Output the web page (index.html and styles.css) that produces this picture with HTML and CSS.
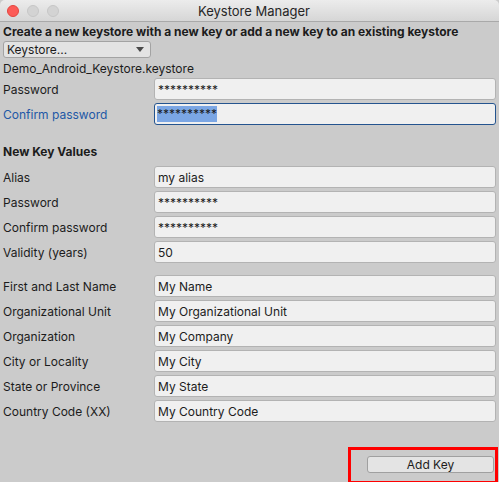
FILE: index.html
```html
<!DOCTYPE html>
<html>
<head>
<meta charset="utf-8">
<link rel="stylesheet" href="styles.css">
</head>
<body>
<div class="window">
  <div class="titlebar">
    <div class="lights">
      <span class="light red"></span>
      <span class="light gray"></span>
      <span class="light gray"></span>
    </div>
    <div class="title">Keystore Manager</div>
  </div>
  <div class="content">
    <div class="heading">Create a new keystore with a new key or add a new key to an existing keystore</div>
    <div class="dropdown"><span>Keystore...</span><span class="arrow"></span></div>
    <div class="line">Demo_Android_Keystore.keystore</div>
    <div class="group">
      <div class="row"><label class="label">Password</label><div class="field">**********</div></div>
      <div class="row"><label class="label focus">Confirm password</label><div class="field focused"><span class="sel">**********</span></div></div>
    </div>
    <div class="heading section">New Key Values</div>
    <div class="group">
      <div class="row"><label class="label">Alias</label><div class="field">my alias</div></div>
      <div class="row"><label class="label">Password</label><div class="field">**********</div></div>
      <div class="row"><label class="label">Confirm password</label><div class="field">**********</div></div>
      <div class="row"><label class="label">Validity (years)</label><div class="field">50</div></div>
    </div>
    <div class="group second">
      <div class="row"><label class="label">First and Last Name</label><div class="field">My Name</div></div>
      <div class="row"><label class="label">Organizational Unit</label><div class="field">My Organizational Unit</div></div>
      <div class="row"><label class="label">Organization</label><div class="field">My Company</div></div>
      <div class="row"><label class="label">City or Locality</label><div class="field">My City</div></div>
      <div class="row"><label class="label">State or Province</label><div class="field">My State</div></div>
      <div class="row"><label class="label">Country Code (XX)</label><div class="field">My Country Code</div></div>
    </div>
    <div class="footer">
      <div class="highlight"><button class="button">Add Key</button></div>
    </div>
  </div>
</div>
</body>
</html>
```
FILE: styles.css
```css
html, body {
  margin: 0;
  padding: 0;
  background: #cbcbcb;
}
body {
  width: 499px;
  height: 482px;
  overflow: hidden;
  font-family: Inter, "Liberation Sans", sans-serif;
  font-size: 12px;
  color: #1c1c1c;
}
.window {
  width: 499px;
  height: 482px;
  background: #cbcbcb;
  border-radius: 5px 5px 0 0;
  overflow: hidden;
}
.titlebar {
  height: 21px;
  border-bottom: 1px solid #a9a9a9;
  background: linear-gradient(#ececec, #d6d6d6);
  display: flex;
  align-items: center;
}
.lights {
  display: flex;
  gap: 8px;
  padding-left: 7px;
  padding-top: 1px;
}
.light {
  width: 12px;
  height: 12px;
  border-radius: 50%;
  box-sizing: border-box;
}
.light.red {
  background: #fc5b57;
  border: 1px solid #e2463f;
}
.light.gray {
  background: #d3d3d3;
  border: 1px solid #c6c6c6;
}
.title {
  flex: 1;
  text-align: center;
  font-size: 13px;
  color: #262626;
  padding-right: 50px;
  padding-top: 1px;
}
.content {
  padding: 0 3px;
  display: flex;
  flex-direction: column;
}
.heading {
  font-weight: 700;
  line-height: 19px;
  height: 19px;
  white-space: nowrap;
  margin-top: 0;
}
.heading.section {
  margin-top: 17px;
  margin-bottom: 5px;
}
.dropdown {
  width: 148px;
  height: 17px;
  box-sizing: border-box;
  border: 1px solid #a3a3a3;
  border-radius: 3px;
  background: #e3e3e3;
  display: flex;
  align-items: center;
  justify-content: space-between;
  padding: 0 6px 0 3px;
  line-height: 15px;
}
.arrow {
  width: 0;
  height: 0;
  border-left: 4px solid transparent;
  border-right: 4px solid transparent;
  border-top: 5px solid #4a4a4a;
}
.line {
  line-height: 19px;
  height: 19px;
  margin-top: 1px;
}
.group {
  display: flex;
  flex-direction: column;
  gap: 3px;
}
.group.second {
  margin-top: 12px;
}
.row {
  display: flex;
  height: 22px;
  align-items: center;
}
.label {
  width: 151px;
  flex: none;
}
.label.focus {
  color: #2258a6;
}
.field {
  flex: 1;
  height: 22px;
  box-sizing: border-box;
  border: 1px solid #b3b3b3;
  border-radius: 3px;
  background: #f0f0f0;
  padding: 0 3px;
  display: flex;
  align-items: center;
  white-space: nowrap;
}
.field.focused {
  border-color: #24548f;
  padding-left: 2px;
}
.sel {
  background: #7ba6e4;
  padding: 1px 0;
  line-height: 14px;
}
.footer {
  display: flex;
  justify-content: flex-end;
  margin-top: 25px;
  margin-right: -2px;
}
.highlight {
  border: 3px solid #ff0000;
  padding: 6px 1px 8px 16px;
}
.button {
  display: block;
  width: 127px;
  height: 17px;
  box-sizing: border-box;
  border: 1px solid #a0a0a0;
  border-radius: 3px;
  background: #e4e4e4;
  font-family: Inter, "Liberation Sans", sans-serif;
  font-size: 12px;
  color: #1c1c1c;
  padding: 0;
  line-height: 15px;
}
```
